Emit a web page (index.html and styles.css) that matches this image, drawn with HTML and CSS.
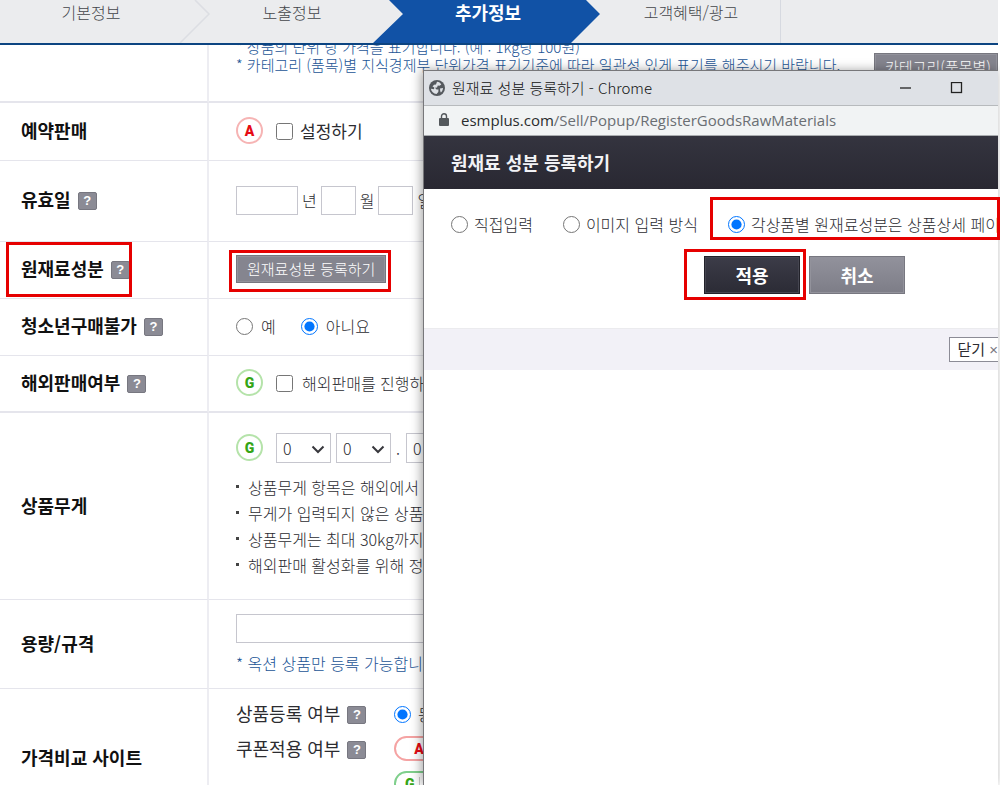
FILE: index.html
```html
<!DOCTYPE html>
<html lang="ko">
<head>
<meta charset="utf-8">
<title>추가정보</title>
<link rel="stylesheet" href="styles.css">
</head>
<body>
<div class="screen">
  <nav class="steps">
    <svg class="steps-art" width="782" height="43" viewBox="0 0 782 43" aria-hidden="true">
      <path d="M195 0L209 14L180 43" fill="none" stroke="#dcdee3" stroke-width="1.5"/>
      <path d="M389 0L403 14L373 43H571L600 14L586 0Z" fill="#1152a6"/>
      <path d="M780.5 0V43" stroke="#d6d9e0"/>
    </svg>
    <a class="step" href="#basic">기본정보</a>
    <a class="step" href="#display">노출정보</a>
    <a class="step current" href="#extra" aria-current="step">추가정보</a>
    <a class="step" href="#benefit">고객혜택/광고</a>
  </nav>

  <main class="page">
    <table class="form">
      <tbody>
      <tr class="r-unit thick">
        <th></th>
        <td>
          <div class="unit">
            <div class="hints">
              <p class="hint">* 상품의 단위 당 가격을 표기합니다. (예 : 1kg당 100원)</p>
              <p class="hint">* 카테고리 (품목)별 지식경제부 단위가격 표기기준에 따라 일관성 있게 표기를 해주시기 바랍니다.</p>
            </div>
            <button class="gray-btn unit-btn" type="button">카테고리(품목별)</button>
          </div>
        </td>
      </tr>
      <tr class="r-reserve">
        <th scope="row">예약판매</th>
        <td><div class="line"><span class="badge red">A</span><label class="opt strong"><input type="checkbox">설정하기</label></div></td>
      </tr>
      <tr class="r-date">
        <th scope="row">유효일<button class="help" type="button" aria-label="유효일 도움말">?</button></th>
        <td><div class="line date"><input class="box year" id="y" type="text"><label for="y">년</label><input class="box" id="m" type="text"><label for="m">월</label><input class="box" id="d" type="text"><label for="d">일</label></div></td>
      </tr>
      <tr class="r-short">
        <th scope="row">원재료성분<button class="help" type="button" aria-label="원재료성분 도움말">?</button></th>
        <td><button class="gray-btn" type="button">원재료성분 등록하기</button></td>
      </tr>
      <tr class="r-short">
        <th scope="row">청소년구매불가<button class="help" type="button" aria-label="청소년구매불가 도움말">?</button></th>
        <td><div class="line yesno"><label class="opt"><input type="radio" name="adult">예</label><label class="opt"><input type="radio" name="adult" checked>아니요</label></div></td>
      </tr>
      <tr class="r-short thick">
        <th scope="row">해외판매여부<button class="help" type="button" aria-label="해외판매여부 도움말">?</button></th>
        <td><div class="line"><span class="badge green">G</span><label class="opt wide"><input type="checkbox">해외판매를 진행하지 않음</label></div></td>
      </tr>
      <tr class="r-weight">
        <th scope="row">상품무게</th>
        <td>
          <div class="line weight">
            <span class="badge green">G</span>
            <div class="digits">
              <span class="sel"><select aria-label="십의 자리"><option>0</option></select><svg width="14" height="9" viewBox="0 0 14 9" aria-hidden="true"><path d="M1.500 1.500L7 7L12.500 1.500"/></svg></span>
              <span class="sel"><select aria-label="일의 자리"><option>0</option></select><svg width="14" height="9" viewBox="0 0 14 9" aria-hidden="true"><path d="M1.500 1.500L7 7L12.500 1.500"/></svg></span>
              <span class="dot">.</span>
              <span class="sel"><select aria-label="소수점 자리"><option>0</option></select></span>
            </div>
          </div>
          <ul class="notes">
            <li>상품무게 항목은 해외에서 주문</li>
            <li>무게가 입력되지 않은 상품은</li>
            <li>상품무게는 최대 30kg까지</li>
            <li>해외판매 활성화를 위해 정확한</li>
          </ul>
        </td>
      </tr>
      <tr class="r-size">
        <th scope="row">용량/규격</th>
        <td><input class="box long" type="text" aria-label="용량/규격"><p class="hint">* 옥션 상품만 등록 가능합니다.</p></td>
      </tr>
      <tr class="r-compare">
        <th scope="row">가격비교 사이트</th>
        <td>
          <div class="pair"><span class="sub">상품등록 여부<button class="help" type="button" aria-label="상품등록 여부 도움말">?</button></span><label class="opt"><input type="radio" name="reg" checked>등록</label></div>
          <div class="pair"><span class="sub">쿠폰적용 여부<button class="help" type="button" aria-label="쿠폰적용 여부 도움말">?</button></span><span class="badge pill red">A</span></div>
          <div class="pair"><span class="sub"></span><span class="badge pill green">G<i></i><b>G</b></span></div>
        </td>
      </tr>
      </tbody>
    </table>
  </main>

  <section class="popup" aria-label="원재료 성분 등록하기">
    <header class="titlebar">
      <svg width="16" height="16" viewBox="0 0 16 16" aria-hidden="true"><circle cx="8" cy="8" r="8" fill="#55595e"/><path d="M8 1.800C10 2 11.500 3 12.300 4.500L10.500 5.800L8.800 5.500L8 7.500L6 7.800L7.500 9.500H9.500L9.300 12L7.500 14C4.500 13.800 2.300 11.600 1.900 8.800L5 9.300L5.300 7.500L3.500 6.500L5 4.800L7 4.500Z" fill="#dee1e6"/><path d="M11 8.500L14 8C13.800 10 13 11.500 11.800 12.500L11.200 11Z" fill="#dee1e6"/></svg>
      <span class="wtitle">원재료 성분 등록하기 - Chrome</span>
      <button class="wbtn" type="button" aria-label="최소화"><svg width="13" height="13" viewBox="0 0 13 13"><path d="M1 6H12" stroke="#222" stroke-width="1.300"/></svg></button>
      <button class="wbtn" type="button" aria-label="최대화"><svg width="13" height="13" viewBox="0 0 13 13"><rect x="1.500" y="0.500" width="10" height="10" fill="none" stroke="#222" stroke-width="1.300"/></svg></button>
    </header>
    <div class="address">
      <svg width="10" height="13" viewBox="0 0 10 13" aria-hidden="true"><rect x="0" y="5" width="10" height="8" rx="1" fill="#54585c"/><path d="M2.500 5V3.300A2.500 2.500 0 0 1 7.500 3.300V5" fill="none" stroke="#54585c" stroke-width="1.400"/></svg>
      <span><strong>esmplus.com</strong>/Sell/Popup/RegisterGoodsRawMaterials</span>
    </div>
    <h1 class="heading">원재료 성분 등록하기</h1>
    <div class="choices">
      <label class="opt"><input type="radio" name="mode">직접입력</label>
      <label class="opt"><input type="radio" name="mode">이미지 입력 방식</label>
      <label class="opt"><input type="radio" name="mode" checked>각상품별 원재료성분은 상품상세 페이</label>
    </div>
    <div class="actions">
      <button class="action dark" type="button">적용</button>
      <button class="action" type="button">취소</button>
    </div>
    <footer class="foot"><button class="close" type="button">닫기 <span>×</span></button></footer>
  </section>

  <div class="mark mark-label"></div>
  <div class="mark mark-register"></div>
  <div class="mark mark-choice"></div>
  <div class="mark mark-apply"></div>
</div>
</body>
</html>
```
FILE: styles.css
```css
* { box-sizing: border-box; }
body {
  margin: 0;
  background: #fff;
  color: #2c2c31;
  font: 300 16px/20px "Noto Sans CJK KR", "Liberation Sans", sans-serif;
}
p, ul, h1 { margin: 0; padding: 0; }
button, input, select { font: inherit; color: inherit; margin: 0; }
.screen { position: relative; height: 100vh; overflow: hidden; }

.steps {
  position: relative;
  z-index: 1;
  display: grid;
  grid-template-columns: 182px 220px 172px 234px;
  height: 45px;
  margin-right: 2px;
  background: #ebecee;
  border-bottom: 2px solid #0c4481;
}
.steps-art { position: absolute; left: 0; top: 0; }
.step {
  position: relative;
  padding-top: 2px;
  text-align: center;
  color: #44464b;
  text-decoration: none;
}
.step.current { color: #fff; font-size: 18px; font-weight: 700; }

.page { margin: -12px 2px 0 0; }
.form { width: 100%; border-spacing: 0; table-layout: fixed; }
.form th, .form td { border-bottom: 1px solid #e5e5ec; white-space: nowrap; }
.form th {
  width: 209px;
  padding: 0 0 3px 21px;
  border-right: 2px solid #ededf2;
  text-align: left;
  font-size: 18px;
  font-weight: 700;
  color: #111;
}
.form td { padding: 0 0 2px 27px; }
.form .thick th, .form .thick td { border-bottom-width: 2px; }
.r-unit { height: 70px; }
.form .r-unit td { vertical-align: top; }
.r-reserve { height: 58px; }
.r-date { height: 81px; }
.r-short { height: 57px; }
.r-weight { height: 187px; }
.r-size { height: 89px; }
.r-compare { height: 140px; }
.form .r-compare td { vertical-align: top; padding-top: 7px; }

.unit { display: flex; justify-content: space-between; padding-top: 5px; }
.hint { color: #1c5596; }
.hints .hint { font-size: 15px; line-height: 18px; }
.line { display: flex; align-items: center; gap: 13px; }
.opt { display: flex; align-items: center; gap: 7px; white-space: nowrap; }
.opt.strong { font-size: 17px; font-weight: 400; }
.opt.wide { gap: 9px; }
.opt input { width: 17px; height: 17px; flex: none; margin-top: 1px; }
.yesno { gap: 25px; }
.yesno .opt { gap: 8px; }
.date { gap: 4px; }
.box {
  width: 35px;
  height: 29px;
  padding: 0 6px;
  border: 1px solid #c6c6ce;
  background: #fff;
}
.box.year { width: 62px; }
.box.long { display: block; width: 400px; margin-bottom: 10px; }

.badge {
  display: flex;
  align-items: center;
  justify-content: center;
  width: 27px;
  height: 27px;
  border: 2px solid;
  border-radius: 14px;
  font: 900 14px/20px Roboto, sans-serif;
}
.badge.red { border-color: #f6b4b4; color: #e60b14; }
.badge.green { border-color: #b5e3aa; color: #35a516; }
.badge.pill { width: 50px; height: 25px; }
.badge.pill.red { border-color: #f5a3a3; }
.badge.pill.green { border-color: #7fcf8c; gap: 4px; }
.badge i { width: 1px; height: 14px; background: #ccc; }
.badge b { color: #1a93b5; }

.help {
  width: 19px;
  height: 18px;
  margin-left: 7px;
  padding: 0;
  border: 1px solid #777780;
  border-radius: 2px;
  background: #8b8b95;
  color: #fff;
  font: 700 13px/16px "Liberation Sans", sans-serif;
  vertical-align: 2px;
}
.gray-btn {
  height: 28px;
  padding: 0 10px;
  border: 1px solid #77777f;
  background: #85858f;
  box-shadow: inset 0 0 0 1px #92929b;
  color: #fff;
  font-size: 15px;
  line-height: 24px;
}
.unit-btn { width: 124px; margin-top: 15px; text-align: left; }

.digits { display: flex; gap: 5px; }
.sel { position: relative; }
.sel select {
  width: 55px;
  height: 30px;
  padding: 0 6px;
  border: 1px solid #c6c6ce;
  border-radius: 0;
  background: #fff;
  appearance: none;
}
.sel svg { position: absolute; right: 6px; top: 12px; }
.sel path { fill: none; stroke: #38383d; stroke-width: 2; }
.dot { width: 5px; padding-top: 5px; }
.notes { padding-top: 11px; list-style: none; }
.notes li { display: flex; align-items: center; gap: 9px; height: 26px; }
.notes li::before { content: ""; width: 3px; height: 3px; background: #444; }
.pair { display: flex; align-items: center; height: 35px; }
.sub { width: 158px; font-size: 18px; font-weight: 400; }

.popup {
  position: absolute;
  z-index: 2;
  left: 423px;
  right: 2px;
  top: 70px;
  bottom: 0;
  overflow: hidden;
  border-left: 1px solid #77777a;
  border-top: 1px solid #77777a;
  background: #fff;
  box-shadow: -2px 0 10px rgba(0, 0, 0, 0.35);
}
.titlebar {
  display: flex;
  align-items: center;
  height: 35px;
  padding: 0 35px 0 5px;
  border-bottom: 1px solid #b7babd;
  background: #dee1e6;
  color: #111;
}
.wtitle { flex: 1; padding-left: 7px; font-size: 15px; }
.wbtn { display: flex; padding: 0; border: 0; background: none; }
.wbtn + .wbtn { margin-left: 38px; }
.address {
  display: flex;
  align-items: center;
  gap: 12px;
  height: 30px;
  padding: 0 0 2px 15px;
  border-bottom: 1px solid #a9acaf;
  background: #f1f3f4;
  color: #6a6e73;
  font: 400 15px/20px "Open Sans", sans-serif;
}
.address strong { color: #2a2c2e; font-weight: 400; }
.heading {
  height: 53px;
  padding-left: 27px;
  background: linear-gradient(#34343f, #292832);
  color: #f2f2f5;
  font-size: 18px;
  font-weight: 700;
  line-height: 52px;
}
.choices { display: flex; gap: 30px; padding: 24px 0 0 27px; }
.choices .opt { gap: 6px; line-height: 22px; }
.actions { display: flex; justify-content: center; gap: 9px; padding: 21px 0 34px 187px; }
.action {
  width: 96px;
  height: 38px;
  padding: 0;
  border: 1px solid #777780;
  background: linear-gradient(#92929c, #7d7d87);
  box-shadow: inset 0 0 0 1px #92929b;
  color: #fff;
  font-size: 18px;
  font-weight: 700;
  line-height: 32px;
}
.action.dark {
  border-color: #22222a;
  background: linear-gradient(#3c3c48, #2b2b35);
  box-shadow: inset 0 0 0 1px #454550;
}
.foot {
  display: flex;
  justify-content: flex-end;
  height: 42px;
  padding-top: 8px;
  border-top: 1px solid #ebebee;
  background: #f2f1f7;
}
.close {
  height: 25px;
  padding: 0 0 0 7px;
  border: 1px solid #8c8c96;
  border-right: 0;
  background: #fff;
  font-size: 15px;
  font-weight: 400;
  line-height: 20px;
}
.close span { color: #77777f; font-family: "Liberation Sans", sans-serif; }

.mark { position: absolute; z-index: 3; border: 3px solid #e60000; }
.mark-label { left: 6px; top: 242px; width: 126px; height: 55px; }
.mark-register { left: 229px; top: 250px; width: 162px; height: 42px; }
.mark-choice { right: 0; top: 197px; width: 290px; height: 43px; }
.mark-apply { left: 684px; top: 249px; width: 122px; height: 51px; }
```
